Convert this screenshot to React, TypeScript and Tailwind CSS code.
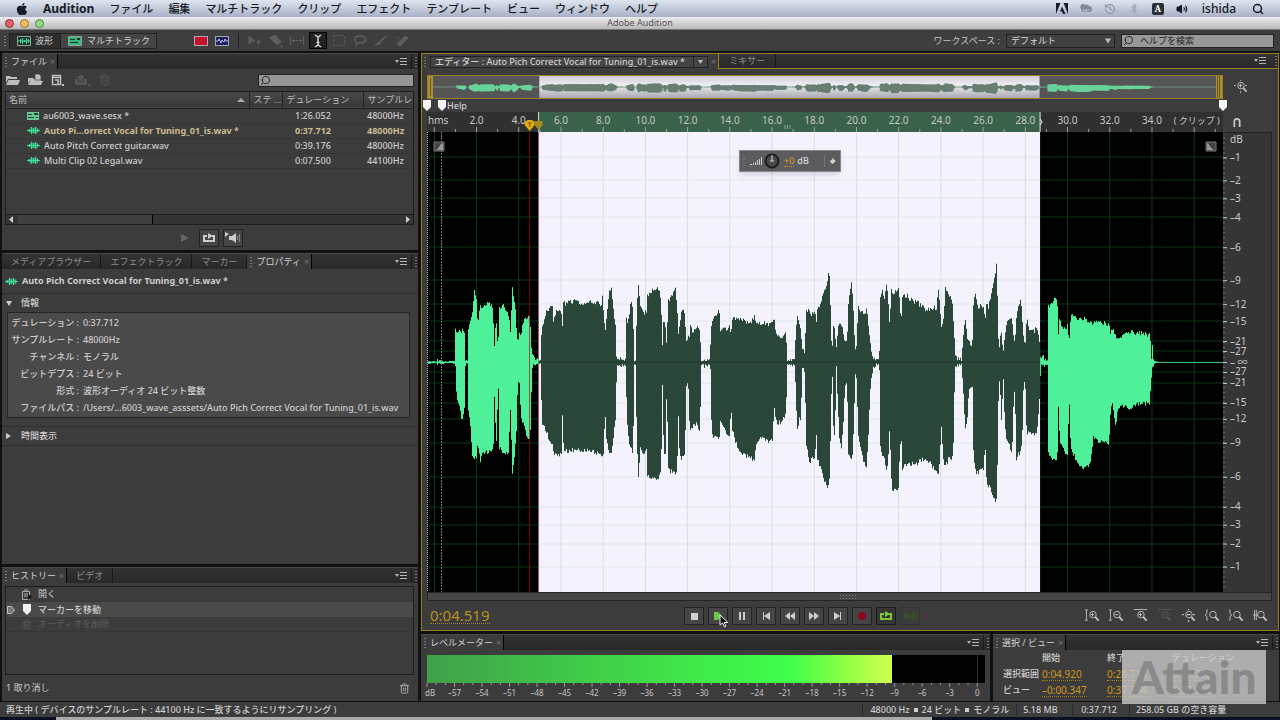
import React from "react";
import { FaApple, FaBluetoothB } from "react-icons/fa";
import { Search, Volume2, History, Trash2 } from "lucide-react";

// view range of the clip, in seconds
const VIEW_START = -0.347;
const VIEW_LENGTH = 37.712;
const SEL_START = 4.94;
const SEL_END = 28.7;
const PLAYHEAD = 4.519;

const pct = (t: number) => `${((t - VIEW_START) / VIEW_LENGTH) * 100}%`;

// envelope of every take: x, peak above the axis, peak below the axis
const TAKES: { offset: number; points: number[] }[] = [
  {
    offset: -21,
    points: [
      21, 1, 1, 48, 1, 1, 50, 4, 3, 53, 1, 1, 60, 2, 2, 75, 1, 1, 88, 2, 1, 103, 2, 2, 105, 35, 11, 110, 27, 38, 118, 30, 45,
      126, 31, 58, 132, 28, 45, 134, 2, 5, 141, 3, 3, 143, 33, 45, 150, 42, 65, 155, 44, 91, 163, 74, 96, 168, 60, 95, 172, 35, 78,
      180, 57, 98, 185, 54, 88, 200, 57, 90, 215, 57, 88, 219, 40, 80, 222, 17, 31, 227, 42, 81, 230, 25, 70, 233, 14, 5, 237, 52, 85,
      247, 57, 89, 255, 52, 90, 265, 47, 88, 270, 29, 45, 276, 72, 110, 283, 60, 91, 288, 35, 68, 292, 19, 18, 297, 29, 21,
      302, 27, 55, 310, 42, 61, 320, 45, 75, 328, 47, 77, 331, 25, 65, 334, 9, 8, 340, 7, 3, 345, 3, 5, 352, 4, 1, 360, 2, 1,
      362, 25, 28, 366, 35, 60, 378, 50, 68, 388, 54, 78, 396, 53, 83, 398, 35, 85, 402, 47, 91, 415, 52, 93, 423, 47, 91,
      426, 35, 51, 430, 65, 88, 435, 57, 88, 445, 60, 88, 470, 60, 86, 490, 57, 87, 510, 59, 86, 530, 58, 90, 543, 57, 91,
      547, 70, 96, 550, 45, 85, 554, 27, 48, 558, 42, 75, 566, 72, 90, 573, 72, 88, 578, 55, 80, 585, 35, 55, 587, 14, 31,
      589, 5, 6, 591, 12, 3, 596, 3, 9, 600, 6, 4, 612, 2, 4, 615, 4, 5, 617, 49, 15, 619, 35, 55, 625, 42, 78, 631, 60, 85, 637, 54, 91,
      640, 22, 51, 642, 2, 2, 646, 3, 3, 649, 55, 78, 654, 74, 115, 660, 54, 85, 670, 49, 90, 678, 49, 85, 680, 65, 111,
      690, 70, 116, 700, 72, 115, 712, 74, 115, 720, 65, 111, 724, 39, 78, 726, 14, 23, 730, 45, 88, 736, 34, 91, 739, 15, 11,
      743, 60, 105, 750, 65, 108, 765, 72, 110, 770, 55, 105, 774, 29, 55, 778, 39, 96, 787, 54, 93, 794, 44, 91, 797, 22, 25,
      803, 25, 18, 808, 27, 65,
    ],
  },
  {
    offset: 789,
    points: [
      1, 42, 66, 5, 27, 63, 10, 32, 61, 22, 35, 61, 28, 32, 70, 31, 12, 28, 33, 2, 3, 42, 3, 6, 55, 4, 3, 58, 3, 3, 60, 19, 11, 64, 39, 71,
      72, 45, 73, 80, 49, 71, 86, 54, 80, 90, 32, 58, 100, 35, 65, 108, 30, 71, 116, 37, 74, 119, 35, 70, 121, 20, 37, 125, 42, 65,
      135, 42, 78, 150, 43, 90, 170, 39, 93, 185, 40, 96, 192, 46, 96, 196, 40, 85, 205, 39, 75, 220, 39, 75, 232, 37, 78,
      246, 39, 76, 252, 40, 45, 256, 29, 58, 266, 25, 60, 280, 25, 56, 287, 28, 48, 289, 9, 21, 291, 2, 3, 300, 3, 5, 312, 4, 4,
      316, 25, 21, 320, 45, 70, 325, 39, 58, 330, 34, 55, 336, 15, 11, 343, 12, 11, 345, 30, 40, 348, 50, 81, 356, 50, 100, 366, 47, 96,
      374, 50, 95, 377, 34, 61, 380, 49, 95, 390, 59, 105, 400, 67, 115, 410, 79, 125, 416, 93, 123, 419, 72, 95, 422, 25, 45,
      425, 7, 1, 430, 40, 75, 434, 29, 68, 437, 9, 0, 441, 27, 28, 446, 39, 71, 452, 39, 86, 458, 30, 68, 463, 19, 25,
      470, 22, 21, 474, 59, 91, 482, 79, 95, 487, 67, 91, 490, 42, 65, 494, 12, 11, 499, 19, 15, 503, 57, 71, 510, 50, 85,
      520, 49, 98, 528, 51, 106, 533, 42, 78, 537, 25, 45, 541, 15, 16, 548, 7, 10, 556, 5, 3, 566, 4, 3, 568, 20, 20, 570, 65, 85,
      576, 70, 91, 582, 62, 95, 588, 79, 105, 593, 62, 100, 598, 35, 60, 602, 75, 111, 606, 67, 126, 618, 72, 128, 624, 72, 123,
      628, 59, 91, 632, 37, 68, 636, 67, 105, 650, 66, 100, 660, 62, 101, 680, 59, 100, 700, 54, 96, 712, 51, 97, 725, 54, 103,
      738, 54, 108, 745, 75, 111, 748, 55, 98, 753, 35, 61, 758, 39, 95, 765, 72, 103, 775, 67, 96, 785, 62, 95, 789, 42, 78,
      793, 15, 11, 798, 7, 8, 806, 6, 3,
    ],
  },
  {
    offset: 1599,
    points: [
      4, 3, 3, 8, 25, 25, 14, 42, 66, 20, 25, 60, 26, 19, 25, 33, 15, 23, 36, 22, 25, 38, 55, 80, 40, 62, 98, 46, 66, 110, 54, 55, 110,
      64, 57, 105, 71, 55, 105, 74, 35, 70, 77, 57, 115, 84, 54, 123, 92, 67, 126, 100, 79, 133, 106, 92, 137, 110, 100, 137,
      112, 32, 65, 116, 9, 11, 121, 32, 38, 124, 29, 65, 128, 9, 5, 133, 22, 58, 138, 37, 78, 146, 41, 81, 155, 42, 93,
      159, 25, 45, 163, 19, 21, 168, 42, 95, 174, 55, 91, 182, 64, 90, 186, 39, 65, 190, 19, 18, 195, 20, 25, 199, 44, 76,
      205, 32, 68, 218, 30, 71, 230, 33, 68, 236, 25, 45, 239, 9, 18, 242, 7, 3, 247, 10, 8, 254, 5, 5, 261, 5, 3, 264, 55, 91,
      270, 57, 91, 278, 57, 96, 286, 67, 100, 291, 55, 91, 294, 29, 45, 298, 44, 75, 302, 34, 83, 310, 34, 88, 322, 35, 91,
      326, 19, 30, 331, 47, 85, 340, 44, 91, 350, 42, 100, 370, 43, 104, 390, 39, 101, 398, 39, 75, 415, 38, 78, 430, 39, 78,
      446, 36, 80, 450, 30, 51, 455, 32, 40, 460, 30, 50, 466, 24, 63, 472, 22, 48, 480, 24, 43, 495, 28, 43, 510, 29, 45,
      530, 29, 41, 550, 28, 41, 568, 26, 39, 572, 12, 21, 576, 14, 5, 580, 3, 4, 583, 1, 2, 588, 1, 0, 600, 0, 0, 789, 0, 0,
    ],
  },
];

const WAVE_WIDTH = 2388;
const WAVE_HEIGHT = 1380;

const jitter = (x: number) => {
  const v = Math.sin(x * 12.9898) * 43758.5453;
  return v - Math.floor(v);
};

// quiet parts flicker down to the axis, loud parts only get a rough edge
const roughen = (level: number, noise: number) =>
  level < 13 ? level * (0.2 + noise * 0.8) : level + noise * 5 - 2;

const buildWave = () => {
  const peaks: [number, number, number][] = [];
  TAKES.forEach(({ offset, points }) => {
    for (let i = 0; i < points.length; i += 3) {
      peaks.push([points[i] + offset, points[i + 1], points[i + 2]]);
    }
  });
  const top: string[] = [];
  const bottom: string[] = [];
  let k = 0;
  for (let x = 0; x <= WAVE_WIDTH; x += 3) {
    while (k < peaks.length - 2 && peaks[k + 1][0] < x) k++;
    const [x0, u0, d0] = peaks[k];
    const [x1, u1, d1] = peaks[k + 1];
    const f = Math.min(1, Math.max(0, (x - x0) / (x1 - x0)));
    const up = roughen(u0 + (u1 - u0) * f, jitter(x));
    const down = roughen(d0 + (d1 - d0) * f, jitter(x + 7));
    // square steps, one per column
    const yTop = (690 - up * 3).toFixed(0);
    const yBottom = (692 + down * 3).toFixed(0);
    top.push(`${x},${yTop}`, `${x + 3},${yTop}`);
    bottom.push(`${x},${yBottom}`, `${x + 3},${yBottom}`);
  }
  return `M${top.join("L")}L${bottom.reverse().join("L")}Z`;
};

const WAVE_PATH = buildWave();

const DB_MARKS: [string, number][] = [
  ["–1", 25], ["–2", 48], ["–3", 66], ["–4", 85], ["–6", 115], ["–9", 148], ["–12", 172], ["–15", 189],
  ["–21", 209], ["–27", 219], ["– ∞", 230], ["–27", 240], ["–21", 251], ["–15", 271], ["–12", 287], ["–9", 311],
  ["–6", 345], ["–4", 375], ["–3", 393], ["–2", 412], ["–1", 435],
];

const yPct = (y: number) => `${(y / 460) * 100}%`;

const Wave = ({ id, color, selected }: { id: string; color: string; selected: string }) => {
  const a = ((SEL_START - VIEW_START) / VIEW_LENGTH) * WAVE_WIDTH;
  const b = ((SEL_END - VIEW_START) / VIEW_LENGTH) * WAVE_WIDTH;
  return (
    <svg width="100%" height="100%" viewBox={`0 0 ${WAVE_WIDTH} ${WAVE_HEIGHT}`} preserveAspectRatio="none">
      <defs>
        <clipPath id={id}>
          <rect x={a} y="0" width={b - a} height={WAVE_HEIGHT} />
        </clipPath>
      </defs>
      <path d={WAVE_PATH} fill={color} />
      <path d={WAVE_PATH} fill={selected} clipPath={`url(#${id})`} />
    </svg>
  );
};

const Grip = () => (
  <svg className="h-3 w-1 shrink-0" viewBox="0 0 4 12" fill="#777">
    <path d="M1 1h2v1H1zM1 4h2v1H1zM1 7h2v1H1zM1 10h2v1H1z" />
  </svg>
);

const MenuIcon = () => (
  <button aria-label="パネルメニュー" className="flex h-3 w-3 items-center justify-center">
    <svg className="h-2 w-3" viewBox="0 0 12 8" fill="#b5b5b5">
      <path d="M0 2h4L2 5zM5 0h7v1H5zM5 3h7v1H5zM5 6h7v1H5z" />
    </svg>
  </button>
);

const WaveIcon = () => (
  <svg className="h-[9px] w-[13px] shrink-0" viewBox="0 0 13 9" stroke="#41dc94">
    <path d="M0 4.500h13" />
    <path d="M2.500 3v3M4.500 1v7M6.500 2v5M8.500 1v7M10.500 2.500v4" strokeWidth="1.500" />
  </svg>
);

const SessionIcon = () => (
  <svg className="h-2 w-3 shrink-0" viewBox="0 0 12 8">
    <path d="M0 0h12v8H0z" fill="#67c795" />
    <path d="M1 2h4v1H1zM7 1h4v2H7zM1 5h6v1H1zM9 5h2v1H9z" fill="#24382d" />
  </svg>
);

interface TabItem {
  label: string;
  active?: boolean;
}

const TabBar = ({ tabs }: { tabs: TabItem[] }) => (
  <div className="flex h-4 shrink-0 items-stretch border-t border-[#4a4a4a] bg-linear-to-b from-[#333] to-[#282828]">
    {tabs.map((tab) =>
      tab.active ? (
        <button key={tab.label} className="flex items-center border-r border-black bg-[#3c3c3c] pr-[2px] pl-[2px] text-[#d0d0d0]">
          <Grip />
          <span className="px-[3px]">{tab.label}</span>
          <span className="text-[#777]">×</span>
        </button>
      ) : (
        <button key={tab.label} className="border-r border-[#191919] px-[9px] text-[#8b8b8b]">
          {tab.label}
        </button>
      )
    )}
    <div className="ml-auto flex items-center gap-1">
      <MenuIcon />
      <div className="flex h-full items-center border-l border-[#191919] pl-[2px]">
        <Grip />
      </div>
    </div>
  </div>
);

const MENU = ["ファイル", "編集", "マルチトラック", "クリップ", "エフェクト", "テンプレート", "ビュー", "ウィンドウ", "ヘルプ"];

const MenuBar = () => (
  <header className="flex h-[17px] shrink-0 items-center bg-linear-to-b from-[#dfe5ef] to-[#a9b1c6] text-[11px] text-[#171b26]">
    <FaApple className="ml-[15px] h-[14px] w-[14px]" />
    <nav className="ml-[14px] flex items-center gap-[15px]">
      <a href="#" className="text-xs font-bold">Audition</a>
      {MENU.map((item) => (
        <a href="#" key={item} className="font-medium">{item}</a>
      ))}
    </nav>
    <div className="ml-auto flex items-center gap-3 pr-4">
      <svg className="h-3 w-3" viewBox="0 0 12 12">
        <path d="M0 0h4.500L0 11zM7.500 0H12v11zM6 3.500L9.500 11H7L6 8.500H4z" fill="#171b26" />
      </svg>
      <svg className="h-3 w-3" viewBox="0 0 12 12">
        <path d="M1 6a2.500 3 0 014-4 3 3 0 014 1 3 3 0 010 6H3a2.500 2.500 0 01-2-3z" fill="#858a98" />
        <path d="M3 6.500a1.500 1.500 0 103 0 1.500 1.500 0 103 0" stroke="#c8cedb" fill="none" />
      </svg>
      <History className="h-3 w-3 text-[#858a98]" />
      <FaBluetoothB className="h-[11px] w-3 text-[#9a9fac]" />
      <span className="flex h-3 w-3 items-center justify-center rounded-xs bg-[#2b2f38] font-serif text-[10px] font-bold text-white">A</span>
      <Volume2 className="h-3 w-3" fill="currentColor" />
      <span className="ml-[2px] text-xs font-medium">ishida</span>
      <Search className="ml-1 h-3 w-3" strokeWidth={3} />
    </div>
  </header>
);

const TitleBar = () => (
  <div className="grid h-[13px] shrink-0 grid-cols-3 items-center border-b border-[#777] bg-linear-to-b from-[#ececec] to-[#b9b9b9]">
    <div className="flex gap-[6px] pl-[5px]">
      <button aria-label="閉じる" className="h-[9px] w-[9px] rounded-full border border-[#8b2f38] bg-[#e5606b]" />
      <button aria-label="しまう" className="h-[9px] w-[9px] rounded-full border border-[#9c6f28] bg-[#f3bd62]" />
      <button aria-label="拡大" className="h-[9px] w-[9px] rounded-full border border-[#468a3c] bg-[#95d987]" />
    </div>
    <h1 className="text-center text-[9px] text-[#555]">Adobe Audition</h1>
  </div>
);

const TOOLS: { name: string; active?: boolean; shape: React.ReactNode }[] = [
  { name: "移動", shape: <path d="M1 2l6 5H4l-3 3zM10.500 5v6M8 8h5" fill="currentColor" /> },
  { name: "切り取り", shape: <path d="M1 4l5-3 6 7-4 3zM12 12h1v1h-1z" fill="currentColor" /> },
  { name: "スリップ", shape: <path d="M.5 2v9M13.500 2v9M2 6.500h10M2 6.500l2-2M2 6.500l2 2M12 6.500l-2-2M12 6.500l-2 2" /> },
  { name: "時間選択", active: true, shape: <path d="M4 1l3 2 3-2M4 13l3-2 3 2M7 3v8M5.500 8.500h3" strokeWidth="1.500" /> },
  { name: "長方形選択", shape: <path d="M1.500 1.500h11v10h-11z" strokeDasharray="2 2" /> },
  { name: "なげなわ", shape: <path d="M3 8C0 5 2 2 7 2s8 4 4 6-6 0-7 1-2 2 0 3" strokeWidth="1.500" /> },
  { name: "ペイントブラシ", shape: <path d="M13 1L8 7 7 6zM7 7c1 3-3 4-6 4 3-1 3-4 6-4z" fill="currentColor" /> },
  { name: "スポット修復", shape: <path d="M2 10L10 2l3 2-8 8zM2 5l2-2" fill="currentColor" /> },
];

const ToolBar = () => (
  <div className="flex h-[21px] shrink-0 items-center bg-[#3e3e3e] pr-[6px] pl-[3px] text-[#cfcfcf]">
    <Grip />
    <div className="ml-[2px] flex h-4 border border-[#222]">
      <button className="flex w-[51px] items-center justify-center gap-1 border-r border-[#222] bg-[#2d2d2d]">
        <svg className="h-[10px] w-[14px]" viewBox="0 0 14 10">
          <path d="M.5.5h13v9H.5z" fill="#1c3127" stroke="#8fa79b" />
          <path d="M1 5h12M3.500 3v4M5.500 2v6M7.500 4v2M9.500 2v6M11.500 3v4" stroke="#45e09a" />
        </svg>
        波形
      </button>
      <button className="flex items-center gap-[5px] bg-[#444] pr-[6px] pl-[7px]">
        <svg className="h-[10px] w-[14px]" viewBox="0 0 14 10">
          <path d="M.5.5h13v9H.5z" fill="#3bb881" stroke="#8fa79b" />
          <path d="M2 3h5v1H2zM9 2h3v2H9zM2 6h8v1H2z" fill="#1c3127" />
        </svg>
        マルチトラック
      </button>
    </div>
    <div className="ml-[37px] flex items-center gap-[7px]">
      <button aria-label="スペクトル周波数" className="h-[10px] w-[14px] border border-[#b5a5a9] bg-[#c4122f]" />
      <button aria-label="スペクトルピッチ" className="h-[10px] w-[14px] border border-[#a5a5b5] bg-[#20225c]">
        <svg className="h-2 w-3" viewBox="0 0 12 8" fill="none" stroke="#b6b9ee">
          <path d="M0 4h2l1-2 2 4 1-3 2 2 1-3 1 2h2" />
        </svg>
      </button>
    </div>
    <div className="mr-[7px] ml-[9px] h-4 w-px bg-[#222]" />
    <div className="flex items-center gap-[3px]">
      {TOOLS.map((tool) => (
        <button
          key={tool.name}
          aria-label={tool.name}
          className={
            tool.active
              ? "flex h-[17px] w-[18px] items-center justify-center border border-black bg-[#232323] text-[#d5d5d5]"
              : "flex h-[17px] w-[18px] items-center justify-center text-[#5e5e5e]"
          }
        >
          <svg className="h-[14px] w-[14px]" viewBox="0 0 14 14" fill="none" stroke="currentColor">
            {tool.shape}
          </svg>
        </button>
      ))}
    </div>
    <label htmlFor="workspace" className="ml-auto text-[#c4c4c4]">ワークスペース :</label>
    <div className="relative ml-[6px]">
      <select
        id="workspace"
        className="block h-[14px] w-[109px] appearance-none border border-[#222] bg-[#414141] pl-1 text-[9px] text-[#d5d5d5]"
      >
        <option>デフォルト</option>
      </select>
      <svg className="pointer-events-none absolute top-1 right-1 h-[6px] w-[6px]" viewBox="0 0 7 6" fill="#bbb">
        <path d="M0 0h7L3.500 6z" />
      </svg>
    </div>
    <div className="ml-[6px] flex h-[14px] w-[153px] items-center border border-[#222] bg-[#989898] pl-px text-[#222]">
      <Search className="h-[11px] w-[11px] -scale-x-100" />
      <input
        aria-label="ヘルプを検索"
        placeholder="ヘルプを検索"
        className="ml-[6px] min-w-0 flex-1 bg-transparent text-[9px] placeholder:text-[#222]"
      />
    </div>
  </div>
);

const FILES = [
  { name: "au6003_wave.sesx *", duration: "1:26.052", rate: "48000Hz", session: true },
  { name: "Auto Pi...orrect Vocal for Tuning_01_is.wav *", duration: "0:37.712", rate: "48000Hz", current: true },
  { name: "Auto Pitch Correct guitar.wav", duration: "0:39.176", rate: "48000Hz" },
  { name: "Multi Clip 02 Legal.wav", duration: "0:07.500", rate: "44100Hz" },
];

const LoopIcon = () => (
  <svg className="h-[10px] w-3" viewBox="0 0 12 10" fill="none" stroke="currentColor" strokeWidth="2">
    <path d="M4 3H1v5h10V3H9" />
    <path d="M5 0l5 3-5 3z" fill="currentColor" stroke="none" />
  </svg>
);

const FilesPanel = () => (
  <section className="flex h-[197px] shrink-0 flex-col bg-[#3c3c3c]">
    <TabBar tabs={[{ label: "ファイル", active: true }]} />
    <div className="flex h-[22px] shrink-0 items-center gap-2 pr-1 pl-1">
      <button aria-label="ファイルを開く">
        <svg className="h-3 w-[14px]" viewBox="0 0 14 12" fill="#bdbdbd">
          <path d="M0 2h4l1 1h6v2H2L0 9zM2.500 6H14l-2 5H0z" />
        </svg>
      </button>
      <button aria-label="ファイルを読み込み">
        <svg className="h-3 w-[15px]" viewBox="0 0 15 12" fill="#bdbdbd">
          <path d="M0 4h5l1 1h7v2H2L0 10zM2.500 7H15l-2 4H0z" />
          <path d="M7 0h4l2 2v4H7z" stroke="#444" strokeWidth=".7" />
        </svg>
      </button>
      <button aria-label="新規ファイル">
        <svg className="h-3 w-[14px]" viewBox="0 0 14 12" fill="none" stroke="#bdbdbd">
          <path d="M1.500 1.500h8v9h-8zM1.500 3.500h8M4 6h3v4" strokeWidth="1.500" />
          <path d="M11 10h2v2h-2z" fill="#bdbdbd" stroke="none" />
        </svg>
      </button>
      <button aria-label="挿入" className="ml-[2px]">
        <svg className="h-3 w-4" viewBox="0 0 16 12" fill="#565656">
          <path d="M6 0l4 4H8v3H4V4H2zM0 5h3v3h6V5h3v6H0zM13 10h2v2h-2z" />
        </svg>
      </button>
      <Trash2 className="h-3 w-3 text-[#555]" />
      <div className="ml-auto flex h-[13px] w-[156px] items-center border border-[#222] bg-[#969696] pl-px text-[#222]">
        <Search className="h-[11px] w-[11px] -scale-x-100" />
        <input aria-label="ファイルを検索" className="min-w-0 flex-1 bg-transparent" />
      </div>
    </div>
    <div className="mr-1 ml-[3px] flex min-h-0 flex-1 flex-col border border-[#1d1d1d]">
      <table className="w-full table-fixed border-collapse text-left">
        <thead>
          <tr className="h-4 border-b border-[#222] bg-linear-to-b from-[#484848] to-[#383838] text-[#bbb]">
            <th className="pl-[3px] font-normal">
              <span className="flex items-center justify-between pr-1">
                名前
                <svg className="h-1 w-2" viewBox="0 0 8 4" fill="#aaa"><path d="M0 4h8L4 0z" /></svg>
              </span>
            </th>
            <th className="w-[33px] border-l border-[#222] pl-1 font-normal whitespace-nowrap">ステ ...</th>
            <th className="w-[81px] border-l border-[#222] pl-1 font-normal">デュレーション</th>
            <th className="w-[50px] overflow-hidden border-l border-[#222] pl-1 font-normal whitespace-nowrap">サンプルレ</th>
          </tr>
        </thead>
        <tbody className="font-medium">
          {FILES.map((file) => (
            <tr
              key={file.name}
              className={
                file.current
                  ? "h-[15px] border-b border-[#363636] font-bold text-[#c9bb90]"
                  : "h-[15px] border-b border-[#363636] text-[#cdcdcd]"
              }
            >
              <td className="pl-[21px] whitespace-nowrap">
                <span className="flex items-center gap-1">
                  {file.session ? <SessionIcon /> : <WaveIcon />}
                  {file.name}
                </span>
              </td>
              <td />
              <td className="pl-[13px]">{file.duration}</td>
              <td className="pl-1">{file.rate}</td>
            </tr>
          ))}
        </tbody>
      </table>
      <div className="mt-auto flex h-[10px] items-stretch border-t border-[#1d1d1d] bg-[#343434]">
        <svg className="h-[9px] w-3" viewBox="0 0 12 9" fill="#ccc"><path d="M7 1v7L3 4.500z" /></svg>
        <div className="w-[135px] border-r border-black bg-[#414141]" />
        <svg className="ml-auto h-[9px] w-3" viewBox="0 0 12 9" fill="#ccc"><path d="M5 1v7l4-3.500z" /></svg>
      </div>
    </div>
    <div className="flex h-[25px] shrink-0 items-center justify-center gap-1 pr-[3px] text-[#ccc]">
      <button aria-label="再生" className="flex h-[18px] w-5 items-center justify-center text-[#666]">
        <svg className="h-2 w-2" viewBox="0 0 8 8" fill="currentColor"><path d="M0 0l8 4-8 4z" /></svg>
      </button>
      <button aria-label="ループ再生" className="flex h-[18px] w-5 items-center justify-center border border-[#222] bg-[#454545]">
        <LoopIcon />
      </button>
      <button aria-label="自動再生" className="flex h-[18px] w-5 items-center justify-center border border-[#222] bg-[#454545]">
        <svg className="h-3 w-4" viewBox="0 0 16 12" fill="currentColor">
          <path d="M0 0l4 2-4 3zM4 4h3l4-3v10L7 8H4z" />
          <path d="M12.500 4v4M14.500 2v8" stroke="#888" />
        </svg>
      </button>
    </div>
  </section>
);

const PROPERTIES = [
  ["デュレーション", "0:37.712"],
  ["サンプルレート", "48000Hz"],
  ["チャンネル", "モノラル"],
  ["ビットデプス", "24 ビット"],
  ["形式", "波形オーディオ 24 ビット整数"],
  ["ファイルパス", "/Users/...6003_wave_asssets/Auto Pich Correct Vocal for Tuning_01_is.wav"],
];

const PropertiesPanel = () => (
  <section className="flex min-h-0 flex-1 flex-col bg-[#3c3c3c] text-[#cdcdcd]">
    <TabBar
      tabs={[
        { label: "メディアブラウザー" },
        { label: "エフェクトラック" },
        { label: "マーカー" },
        { label: "プロパティ", active: true },
      ]}
    />
    <h2 className="flex h-[25px] shrink-0 items-center gap-1 border-b border-[#2e2e2e] pl-[3px] font-bold">
      <WaveIcon />
      Auto Pich Correct Vocal for Tuning_01_is.wav *
    </h2>
    <button className="flex h-[18px] shrink-0 items-center gap-[9px] pl-1 font-medium">
      <svg className="h-[5px] w-[6px]" viewBox="0 0 6 5" fill="#ccc"><path d="M0 0h6L3 5z" /></svg>
      情報
    </button>
    <dl className="mr-2 ml-[5px] grid shrink-0 grid-cols-[69px_1fr] border border-[#262626] bg-[#4a4a4a] pt-px pb-[1px] pl-[2px] font-medium">
      {PROPERTIES.map(([label, value]) => (
        <React.Fragment key={label}>
          <dt className="text-right leading-[17px] whitespace-nowrap">{label} :</dt>
          <dd className="pl-1 leading-[17px] whitespace-nowrap">{value}</dd>
        </React.Fragment>
      ))}
    </dl>
    <button className="mt-2 flex h-5 shrink-0 items-center gap-[10px] border-y border-[#303030] pl-1 font-medium">
      <svg className="h-[6px] w-[5px]" viewBox="0 0 5 6" fill="#ccc"><path d="M0 0v6l5-3z" /></svg>
      時間表示
    </button>
  </section>
);

const HistoryPanel = () => (
  <section className="flex h-[134px] shrink-0 flex-col bg-[#3c3c3c] text-[#cdcdcd]">
    <TabBar tabs={[{ label: "ヒストリー", active: true }, { label: "ビデオ" }]} />
    <ul className="mt-[3px] mr-1 ml-[3px] flex-1 border border-[#1d1d1d]">
      <li className="flex h-[15px] items-center gap-[6px] border-b border-[#363636] pl-4">
        <svg className="h-[11px] w-[10px]" viewBox="0 0 10 11" fill="none" stroke="#aaa">
          <path d="M.5 2.500h7v8h-7zM2 1h4M2 5h4M2 7h4" />
          <path d="M6 5l4 3-4 3z" fill="#111" stroke="none" />
        </svg>
        開く
      </li>
      <li className="flex h-[15px] items-center gap-[6px] bg-[#4a4a4a] font-medium">
        <svg className="h-2 w-[10px]" viewBox="0 0 9 8" fill="#777" stroke="#bbb"><path d="M1 .5h4l3 3.500-3 3.500H1z" /></svg>
        <svg className="h-[11px] w-[10px]" viewBox="0 0 10 11" fill="#f2f2f2"><path d="M1 0h8v7l-4 4-4-4z" /></svg>
        マーカーを移動
      </li>
      <li className="flex h-[15px] items-center gap-[6px] border-b border-[#363636] pl-4 text-[#5c5c5c]">
        <Trash2 className="h-[11px] w-[10px]" />
        オーディオを削除
      </li>
    </ul>
    <div className="flex h-[26px] shrink-0 items-center justify-between pr-2 pl-1">
      <span>1 取り消し</span>
      <button aria-label="削除"><Trash2 className="h-[11px] w-[11px] text-[#b0b0b0]" /></button>
    </div>
  </section>
);

const Overview = () => (
  <svg className="h-6 w-full border border-[#98801f] bg-[#555]">
    <defs>
      <linearGradient id="ovSel" x1="0" x2="0" y1="0" y2="1">
        <stop offset="0" stopColor="#cfced4" />
        <stop offset="0.4" stopColor="#eeedf2" />
        <stop offset="1" stopColor="#aaa9af" />
      </linearGradient>
    </defs>
    <rect x={pct(SEL_START)} width="63%" height="100%" fill="url(#ovSel)" />
    <line x1="0" x2="100%" y1="11" y2="11" stroke="#7ea08f" strokeOpacity=".7" />
    <svg y="0" height="22" width="100%">
      <Wave id="ovClip" color="#67d39b" selected="#6b7c74" />
    </svg>
    <rect width="5" height="22" fill="#a98f37" />
    <path d="M2.500 2v18" stroke="#6d5a18" />
    <svg x="100%" overflow="visible">
      <path d="M-6 0h6v22h-6z" fill="#a98f37" />
      <path d="M-4.500 0v22M-2.500 0v22" stroke="#6d5a18" />
    </svg>
  </svg>
);

const Pin = () => (
  <svg className="h-[11px] w-[8px]" viewBox="0 0 8 11" fill="#f5f5f5"><path d="M0 0h8v7L4 11 0 7z" /></svg>
);

const Ruler = () => {
  const labels = Array.from({ length: 17 }, (_, i) => (i + 1) * 2);
  const ticks = Array.from({ length: 38 }, (_, i) => i);
  return (
    <svg className="h-5 w-full overflow-hidden bg-[#303030] text-[10px]" fill="#c4c8c6">
      <rect x={pct(SEL_START)} width="63%" height="20" fill="#3a6149" />
      {ticks.map((t) => (
        <line key={t} x1={pct(t)} x2={pct(t)} y1={t % 2 ? 17 : 15} y2="20" stroke="#9aa39e" />
      ))}
      <text x="1" y="12">hms</text>
      {labels.map((t) => (
        <text key={t} x={pct(t)} y="12" textAnchor="middle">{t.toFixed(1)}</text>
      ))}
      <text x="99.6%" y="12" textAnchor="end" className="text-[9px]">( クリップ )</text>
      <line x1={pct(SEL_START)} x2={pct(SEL_START)} y1="0" y2="20" stroke="#cfe0d6" />
      <line x1={pct(SEL_END)} x2={pct(SEL_END)} y1="0" y2="20" stroke="#e5e5e5" />
      <svg x={pct(SEL_END)} overflow="visible"><path d="M0 7l2 3-2 3" stroke="#eee" fill="none" /></svg>
      <svg x={pct(PLAYHEAD)} overflow="visible">
        <path d="M-5 10l3-2h4l3 2v3l-5 6-5-6z" fill="#e0ae12" />
        <path d="M-2 11h4M0 11v4" stroke="#6d520a" />
      </svg>
      <svg x={pct(SEL_START)} overflow="visible">
        <path d="M-4 9h8v4l-4 5-4-5z" fill="#a18c1e" />
      </svg>
      <path d="M358 13v4M360.500 13v4M363 13v4" stroke="#8ba695" />
    </svg>
  );
};

const WaveChart = () => (
  <svg className="h-full min-h-0 w-full bg-black">
    {Array.from({ length: 19 }, (_, i) => i * 2).map((t) => (
      <line key={t} x1={pct(t)} x2={pct(t)} y1="0" y2="100%" stroke="#0d3a16" />
    ))}
    {DB_MARKS.map(([label, y]) => (
      <line key={label + y} x1="0" x2="100%" y1={yPct(y)} y2={yPct(y)} stroke="#0b3412" />
    ))}
    <rect x={pct(SEL_START)} width="63%" height="100%" fill="#f4f3fd" />
    <svg x={pct(SEL_START)} width="63%" height="100%">
      {[1, 2, 3, 4, 5, 6, 7, 8, 9, 10, 11, 12].map((i) => {
        const x = `${((i * 2 + 4 - SEL_START) / (SEL_END - SEL_START)) * 100}%`;
        return <line key={i} x1={x} x2={x} y1="0" y2="100%" stroke="#d4e2dd" />;
      })}
      {DB_MARKS.map(([label, y]) => (
        <line key={label + y} x1="0" x2="100%" y1={yPct(y)} y2={yPct(y)} stroke="#dde8e6" />
      ))}
    </svg>
    <Wave id="chartClip" color="#4ff09a" selected="#2b4739" />
    <line x1={pct(SEL_START)} x2={pct(SEL_END)} y1="50%" y2="50%" stroke="#20382b" />
    <line x1="0.5" x2="0.5" y1="0" y2="100%" stroke="#b9c6dd" strokeDasharray="1 1" />
    <line x1="14.5" x2="14.5" y1="0" y2="100%" stroke="#777" strokeDasharray="2 1" />
    <line x1={pct(PLAYHEAD)} x2={pct(PLAYHEAD)} y1="0" y2="100%" stroke="#b80000" strokeOpacity=".65" shapeRendering="crispEdges" />
    <line x1={pct(SEL_START)} x2={pct(SEL_START)} y1="0" y2="100%" stroke="#c9506a" strokeDasharray="2 2" />
    <path d="M7 10h10v9H7z" fill="#444" stroke="#777" />
    <path d="M8 18c4 0 4-6 8-7v7z" fill="#999" />
    <svg x="100%" overflow="visible">
      <path d="M-17 10h10v9h-10z" fill="#444" stroke="#777" />
      <path d="M-16 18V11c3 1 4 7 8 7z" fill="#999" />
    </svg>
  </svg>
);

const DbScale = () => (
  <svg className="h-full w-full overflow-hidden border-t border-r border-[#222] bg-[#353535] text-[10px]" fill="#c9c9c9">
    {Array.from({ length: 92 }, (_, i) => (
      <line key={i} x1="0" x2="2" y1={`${i * 1.087}%`} y2={`${i * 1.087}%`} stroke="#777" />
    ))}
    {DB_MARKS.map(([label, y]) => (
      <g key={label + y}>
        <line x1="0" x2="4" y1={yPct(y)} y2={yPct(y)} stroke="#c9c9c9" />
        <text x="7" y={yPct(y)} dy="3">{label}</text>
      </g>
    ))}
    <text x="7" y="10">dB</text>
  </svg>
);

const Hud = () => (
  <div className="absolute top-[18px] left-[39.2%] flex h-[22px] w-[102px] items-center border border-[#888] bg-[#5c5c60] pl-[2px] text-[#d8d8d8] shadow-md">
    <Grip />
    <svg className="ml-1 h-2 w-3" viewBox="0 0 12 8" fill="#ccc">
      <path d="M0 7h2v1H0zM3 6h1v2H3zM5 5h1v3H5zM7 3h1v5H7zM9 2h1v6H9zM11 0h1v8h-1z" />
    </svg>
    <svg className="ml-[2px] h-4 w-4" viewBox="0 0 16 16">
      <circle cx="8" cy="8" r="6.500" fill="#4a4a4a" stroke="#1c1c1c" strokeWidth="2" />
      <path d="M8 2v6M6 8h4" stroke="#ddd" />
    </svg>
    <button className="ml-1 border-b border-dotted border-[#d08a1c] text-[9px] leading-[10px] font-medium text-[#dc9320]">+0</button>
    <span className="ml-[3px] text-[9px] font-medium">dB</span>
    <button aria-label="固定" className="ml-auto flex h-3 w-4 items-center justify-center border-l border-[#777]">
      <svg className="h-[7px] w-[7px]" viewBox="0 0 8 8" fill="#d5d5d5"><path d="M4 0l4 4-2 .5L4.500 7 3 5.500 0 8l2.500-3L1 3.500 3.500 2z" /></svg>
    </button>
  </div>
);

const TRANSPORT: { name: string; color: string; shape: React.ReactNode }[] = [
  { name: "停止", color: "text-[#cfcfcf]", shape: <path d="M3 3h7v7H3z" /> },
  { name: "再生", color: "text-[#68c944]", shape: <path d="M2 2h4l4 4-4 4H2z" /> },
  { name: "一時停止", color: "text-[#cfcfcf]", shape: <path d="M3 2h2v8H3zM7 2h2v8H7z" /> },
  { name: "先頭へ", color: "text-[#cfcfcf]", shape: <path d="M3 2h1v8H3zM10 2v8L4 6z" /> },
  { name: "早戻し", color: "text-[#cfcfcf]", shape: <path d="M6 2v8L1 6zM11 2v8L6 6z" /> },
  { name: "早送り", color: "text-[#cfcfcf]", shape: <path d="M1 2v8l5-4zM6 2v8l5-4z" /> },
  { name: "末尾へ", color: "text-[#cfcfcf]", shape: <path d="M2 2v8l6-4zM8 2h1v8H8z" /> },
  { name: "録音", color: "text-[#8c0a1a]", shape: <circle cx="6" cy="6" r="4" /> },
];

const ZOOMS: { name: string; dim?: boolean; shape: React.ReactNode }[] = [
  { name: "ズームイン（振幅）", shape: <path d="M1.500 1v11M0 1h3M0 12h3M6 6h4M8 4v4" /> },
  { name: "ズームアウト（振幅）", shape: <path d="M1.500 1v11M0 1h3M0 12h3M6 6h4" /> },
  { name: "ズームイン（時間）", shape: <path d="M1 .5h14M6 6h4M8 4v4" /> },
  { name: "ズームアウト（時間）", dim: true, shape: <path d="M1 .5h14M6 6h4" /> },
  { name: "全体を表示", shape: <path d="M6 6h4M8 0v1M1 6h2M13 6h2M8 12v2" strokeWidth="1.500" /> },
  { name: "イン点にズーム", shape: <path d="M3 1H2v4L0 6.500 2 8v4h1" /> },
  { name: "アウト点にズーム", shape: <path d="M0 1h1v4l2 1.500L1 8v4H0" /> },
  { name: "選択範囲にズーム", shape: <path d="M1.500 1v11M3.500 1v11M0 6.500h5" /> },
];

const Lens = ({ dim, children }: { dim?: boolean; children: React.ReactNode }) => (
  <svg
    className={dim ? "h-[14px] w-[15px] text-[#585858]" : "h-[14px] w-[15px] text-[#bdbdbd]"}
    viewBox="0 0 16 15"
    fill="none"
    stroke="currentColor"
  >
    <circle cx="8.500" cy="6" r="3.500" />
    <path d="M11 8.500L14.500 12.500" strokeWidth="2" />
    {children}
  </svg>
);

const EditorPanel = () => (
  <section className="flex min-h-0 flex-1 flex-col border border-[#98801f] bg-[#3c3c3c]">
    <div className="flex h-[15px] shrink-0 items-stretch bg-linear-to-b from-[#333] to-[#282828] text-[#d0d0d0]">
      <div className="flex items-center gap-[3px] border-r border-[#98801f] bg-[#3c3c3c] pr-[2px] pl-px">
        <Grip />
        <button className="flex h-3 items-center border border-[#222] bg-[#444] pl-1 font-medium">
          エディター : Auto Pich Correct Vocal for Tuning_01_is.wav *
          <span className="ml-2 flex h-full items-center border-l border-[#222] px-1">
            <svg className="h-1 w-[5px]" viewBox="0 0 5 4" fill="#bbb"><path d="M0 0h5L2.500 4z" /></svg>
          </span>
        </button>
        <span className="text-[#777]">×</span>
      </div>
      <div className="flex flex-1 items-center border-b border-[#98801f]">
        <button className="h-full border-r border-[#191919] px-[10px] text-[#8b8b8b]">ミキサー</button>
        <div className="ml-auto flex items-center gap-2">
          <MenuIcon />
          <Grip />
        </div>
      </div>
    </div>
    <div className="grid min-h-0 flex-1 grid-cols-[1fr_55px] grid-rows-[24px_13px_20px_1fr_9px] pt-[6px] pl-[5px]">
      <Overview />
      <button aria-label="全体を表示" className="flex items-center justify-center pr-5">
        <Lens><path d="M6 6h4M8 4v4M8 0v1M1 6h2M13 6h2M8 12v2" /></Lens>
      </button>
      <div className="-mx-1 flex items-center text-[9px] font-medium text-[#cfcfcf]">
        <Pin />
        <span className="ml-[7px]"><Pin /></span>
        <span className="ml-px">Help</span>
        <span className="ml-auto"><Pin /></span>
      </div>
      <div />
      <Ruler />
      <button aria-label="スナップ" className="flex items-center pl-[10px]">
        <svg className="h-[9px] w-[8px]" viewBox="0 0 9 10" fill="none" stroke="#c9c9c9" strokeWidth="2">
          <path d="M1.500 10V4a3 3 0 016 0v6" />
        </svg>
      </button>
      <div className="relative min-h-0 overflow-hidden">
        <WaveChart />
        <Hud />
      </div>
      <div className="min-h-0 pr-[6px]"><DbScale /></div>
      <div className="col-span-2 mr-[6px] flex items-center justify-center border border-[#262626] bg-[#464646]">
        <svg className="h-1 w-5" viewBox="0 0 20 4" fill="#888">
          <path d="M0 0h1v1H0zM3 0h1v1H3zM6 0h1v1H6zM9 0h1v1H9zM12 0h1v1h-1zM15 0h1v1h-1zM0 3h1v1H0zM3 3h1v1H3zM6 3h1v1H6zM9 3h1v1H9zM12 3h1v1h-1zM15 3h1v1h-1z" />
        </svg>
      </div>
    </div>
    <div className="flex h-[29px] shrink-0 items-center pr-[6px] pl-2">
      <div className="w-[254px]">
        <button className="border-b border-dotted border-[#a5801c] text-[15px] leading-4 text-[#b98f1f]">0:04.519</button>
      </div>
      <div className="flex gap-1">
        {TRANSPORT.map((item) => (
          <button
            key={item.name}
            aria-label={item.name}
            className="relative flex h-[18px] w-5 items-center justify-center border border-[#222] bg-[#454545]"
          >
            <svg className={`h-3 w-3 ${item.color}`} viewBox="0 0 12 12" fill="currentColor">{item.shape}</svg>
            {item.name === "再生" && (
              <svg className="absolute top-[6px] left-[10px] z-10 h-[14px] w-[10px]" viewBox="0 0 10 14" fill="#111" stroke="#eee">
                <path d="M1 1v10l2.500-2L5.500 13l1.500-1-2-3.500h4z" />
              </svg>
            )}
          </button>
        ))}
        <button aria-label="ループ再生" className="flex h-[18px] w-5 items-center justify-center border border-[#1c1c1c] bg-[#363636] text-[#7cc832]">
          <LoopIcon />
        </button>
        <button aria-label="選択範囲をスキップ" className="flex h-[18px] w-5 items-center justify-center border border-[#333] text-[#35582a]">
          <svg className="h-2 w-3" viewBox="0 0 12 8" fill="none" stroke="currentColor" strokeWidth="2">
            <path d="M4 1L1 4l3 3M8 1l3 3-3 3M5 4h2" />
          </svg>
        </button>
      </div>
      <div className="ml-auto flex">
        {ZOOMS.map((zoom) => (
          <button key={zoom.name} aria-label={zoom.name} className="flex w-6 justify-center">
            <Lens dim={zoom.dim}>{zoom.shape}</Lens>
          </button>
        ))}
      </div>
    </div>
  </section>
);

const LevelMeter = () => {
  const meterPct = (db: number) => `${((db + 60) / 60) * 98.6}%`;
  return (
    <section className="flex min-w-0 flex-1 flex-col bg-[#3c3c3c]">
      <TabBar tabs={[{ label: "レベルメーター", active: true }]} />
      <div className="mt-[5px] mr-[5px] ml-[6px] flex flex-col">
        <div className="flex h-7 bg-black">
          <div className="w-[83.3%] bg-[linear-gradient(90deg,#3fa04a_0%,#40e048_50%,#3eff4a_78%,#8eff45_90%,#d0ff50_100%)]" />
          <div className="ml-auto mr-[7px] w-px bg-[#333]" />
        </div>
        <svg className="h-4 w-full overflow-visible text-[8px]" fill="#c4c4c4">
          {Array.from({ length: 61 }, (_, i) => i - 60).map((db) => (
            <line key={db} x1={meterPct(db)} x2={meterPct(db)} y1="0" y2={db % 3 ? 2 : 4} stroke="#999" />
          ))}
          <text x="-2" y="13">dB</text>
          {Array.from({ length: 20 }, (_, i) => -57 + i * 3).map((db) => (
            <text key={db} x={meterPct(db)} y="13" textAnchor="middle">{`${db}`.replace("-", "–")}</text>
          ))}
        </svg>
      </div>
    </section>
  );
};

const SelectionPanel = () => (
  <section className="flex w-[286px] shrink-0 flex-col bg-[#3c3c3c] text-[#cdcdcd]">
    <TabBar tabs={[{ label: "選択 / ビュー", active: true }]} />
    <table className="w-[268px] table-fixed text-left leading-4">
      <thead>
        <tr>
          <th className="w-[49px]" />
          <th className="w-[65px] font-medium">開始</th>
          <th className="w-[65px] font-medium">終了</th>
          <th className="font-medium">デュレーション</th>
        </tr>
      </thead>
      <tbody className="text-[#cf951d]">
        {[
          ["選択範囲", "0:04.920", "0:28.713", "0:23.793"],
          ["ビュー", "–0:00.347", "0:37.364", "0:37.712"],
        ].map(([label, ...values]) => (
          <tr key={label}>
            <th className="pl-[10px] font-medium whitespace-nowrap text-[#cdcdcd]">{label}</th>
            {values.map((value) => (
              <td key={value} className="text-[10px]">
                <button className="border-b border-dotted border-[#a5801c] leading-[11px]">{value}</button>
              </td>
            ))}
          </tr>
        ))}
      </tbody>
    </table>
  </section>
);

const StatusBar = () => (
  <footer className="flex h-[15px] shrink-0 items-center bg-[#3c3c3c] pl-[6px] font-medium text-[#cdcdcd]">
    <span>再生中 ( デバイスのサンプルレート : 44100 Hz に一致するようにリサンプリング )</span>
    <div className="ml-auto flex items-center">
      <span className="flex items-center gap-1 border-l border-[#2a2a2a] px-[7px]">
        48000 Hz <i className="h-1 w-1 bg-[#cdcdcd]" /> 24 ビット <i className="h-1 w-1 bg-[#cdcdcd]" /> モノラル
      </span>
      <span className="w-[56px] border-l border-[#2a2a2a] pl-[6px]">5.18 MB</span>
      <span className="border-l border-[#2a2a2a] pr-3 pl-2">0:37.712</span>
      <span className="w-[151px] border-l border-[#2a2a2a] pl-[6px]">258.05 GB の空き容量</span>
    </div>
  </footer>
);

export default function App() {
  return (
    <div className="relative flex h-screen flex-col overflow-hidden bg-[#111] font-['Noto_Sans','Noto_Sans_CJK_JP',sans-serif] text-[9px] leading-3">
      <MenuBar />
      <TitleBar />
      <ToolBar />
      <main className="flex min-h-0 flex-1 gap-[3px] pt-[2px] pb-px">
        <div className="flex w-[418px] shrink-0 flex-col gap-[3px] pl-[2px]">
          <FilesPanel />
          <PropertiesPanel />
          <HistoryPanel />
        </div>
        <div className="flex min-w-0 flex-1 flex-col gap-[3px] pr-px">
          <EditorPanel />
          <div className="flex h-[67px] shrink-0 gap-[3px]">
            <LevelMeter />
            <SelectionPanel />
          </div>
        </div>
      </main>
      <StatusBar />
      <div className="flex h-[3px] shrink-0">
        <div className="w-14 bg-[#0b0f22]" />
        <div className="flex-1 bg-[#a9a9a9]" />
        <div className="w-[348px] bg-[#0b0f22]" />
      </div>
      <div className="absolute right-[14px] bottom-4 flex h-[54px] w-36 items-center justify-center bg-[#c9c9c9]/80 font-['Lato'] text-[46px] leading-none font-black text-[#858585]/90">
        Attain
      </div>
    </div>
  );
}
